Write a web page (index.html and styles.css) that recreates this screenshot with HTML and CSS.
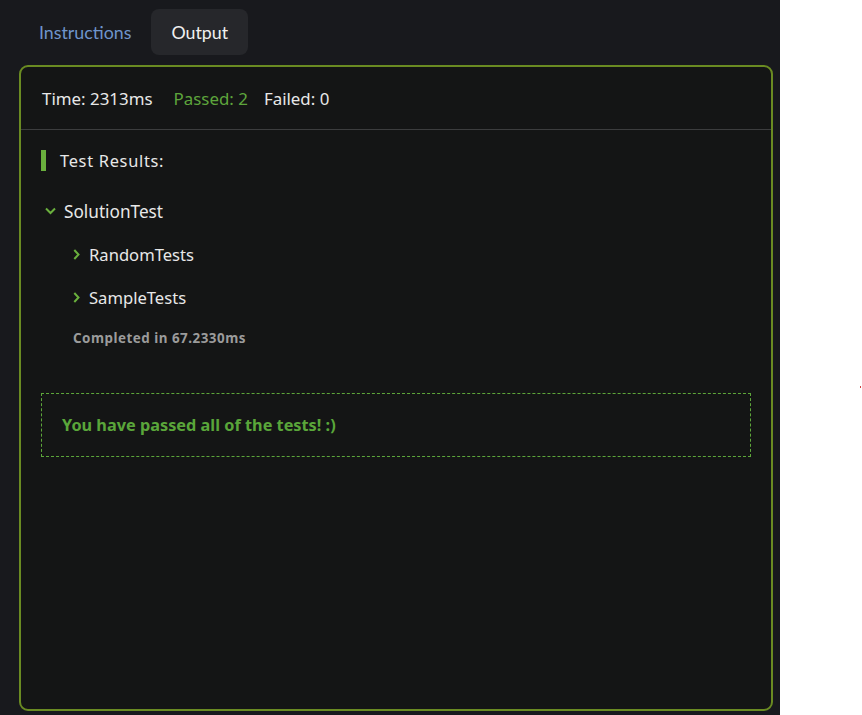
FILE: index.html
```html
<!DOCTYPE html>
<html>
<head>
<meta charset="utf-8">
<link rel="stylesheet" href="styles.css">
</head>
<body>
<div class="app">
  <div class="tabs">
    <div class="tab tab-link">Instructions</div>
    <div class="tab tab-active">Output</div>
  </div>
  <div class="panel">
    <div class="summary">
      <span class="stat">Time: 2313ms</span>
      <span class="stat pass">Passed: 2</span>
      <span class="stat">Failed: 0</span>
    </div>
    <div class="results">
      <div class="heading">Test Results:</div>
      <div class="group">
        <div class="row row-top">
          <svg class="chev-down" width="11" height="8" viewBox="0 0 11 8"><path d="M1 1.5 L5.5 6 L10 1.5" fill="none" stroke="#6ab03d" stroke-width="2"/></svg>
          <span>SolutionTest</span>
        </div>
        <div class="children">
          <div class="row row-child">
            <svg class="chev-right" width="7" height="11" viewBox="0 0 7 11"><path d="M1.3 1 L5.5 5.5 L1.3 10" fill="none" stroke="#6ab03d" stroke-width="2"/></svg>
            <span>RandomTests</span>
          </div>
          <div class="row row-child">
            <svg class="chev-right" width="7" height="11" viewBox="0 0 7 11"><path d="M1.3 1 L5.5 5.5 L1.3 10" fill="none" stroke="#6ab03d" stroke-width="2"/></svg>
            <span>SampleTests</span>
          </div>
          <div class="completed">Completed in 67.2330ms</div>
        </div>
      </div>
      <div class="passed-box">You have passed all of the tests! :)</div>
    </div>
  </div>
</div>
<div class="dot"></div>
</body>
</html>
```

FILE: styles.css
```css
html, body {
  margin: 0;
  padding: 0;
  background: #ffffff;
}
.app {
  width: 780px;
  height: 715px;
  background: #18191d;
  box-sizing: border-box;
  padding: 9px 0 0 19px;
}
.tabs {
  display: flex;
  height: 46px;
}
.tab {
  font-family: Lato, "Liberation Sans", sans-serif;
  font-size: 17.8px;
  padding: 0 20px;
  display: flex;
  align-items: center;
  border-radius: 8px;
}
.tab-link {
  color: #6f95cc;
}
.tab-active {
  background: #26272b;
  color: #f0f0f0;
}
.panel {
  margin-top: 10px;
  width: 754px;
  height: 646px;
  box-sizing: border-box;
  border: 2px solid #6a8b22;
  border-radius: 9px;
  background: #141515;
  font-family: "Noto Sans", "Open Sans", sans-serif;
  color: #e8e8e8;
}
.summary {
  height: 62px;
  border-bottom: 1px solid #3c3d3e;
  display: flex;
  align-items: center;
  padding-left: 21px;
  font-size: 16.9px;
}
.stat + .stat {
  margin-left: 21px;
}
.stat.pass + .stat {
  margin-left: 16px;
}
.pass {
  color: #5ea53c;
}
.results {
  padding: 20px 20px 0 20px;
}
.heading {
  border-left: 5px solid #6ab03d;
  padding-left: 14px;
  height: 21px;
  line-height: 21px;
  font-size: 16.4px;
  letter-spacing: 0.7px;
}
.group {
  margin-top: 29px;
}
.row {
  display: flex;
  align-items: center;
  font-size: 16.6px;
  height: 22px;
}
.row-top {
  font-size: 17.2px;
}
.row-top svg {
  margin-left: 4px;
  margin-right: 8px;
}
.children {
  padding-left: 32px;
}
.row-child {
  margin-top: 21px;
}
.row-child svg {
  margin-right: 9px;
}
.completed {
  margin-top: 21px;
  line-height: 18px;
  font-size: 13.4px;
  font-weight: bold;
  color: #9b9b9b;
  letter-spacing: 0.5px;
}
.passed-box {
  margin-top: 46px;
  height: 64px;
  border: 1px dashed #5da63a;
  box-sizing: border-box;
  display: flex;
  align-items: center;
  padding-left: 20px;
  font-size: 16.3px;
  font-weight: bold;
  color: #5aa63a;
}
.dot {
  position: absolute;
  left: 860px;
  top: 386px;
  width: 1px;
  height: 2px;
  background: #d04040;
}
```
